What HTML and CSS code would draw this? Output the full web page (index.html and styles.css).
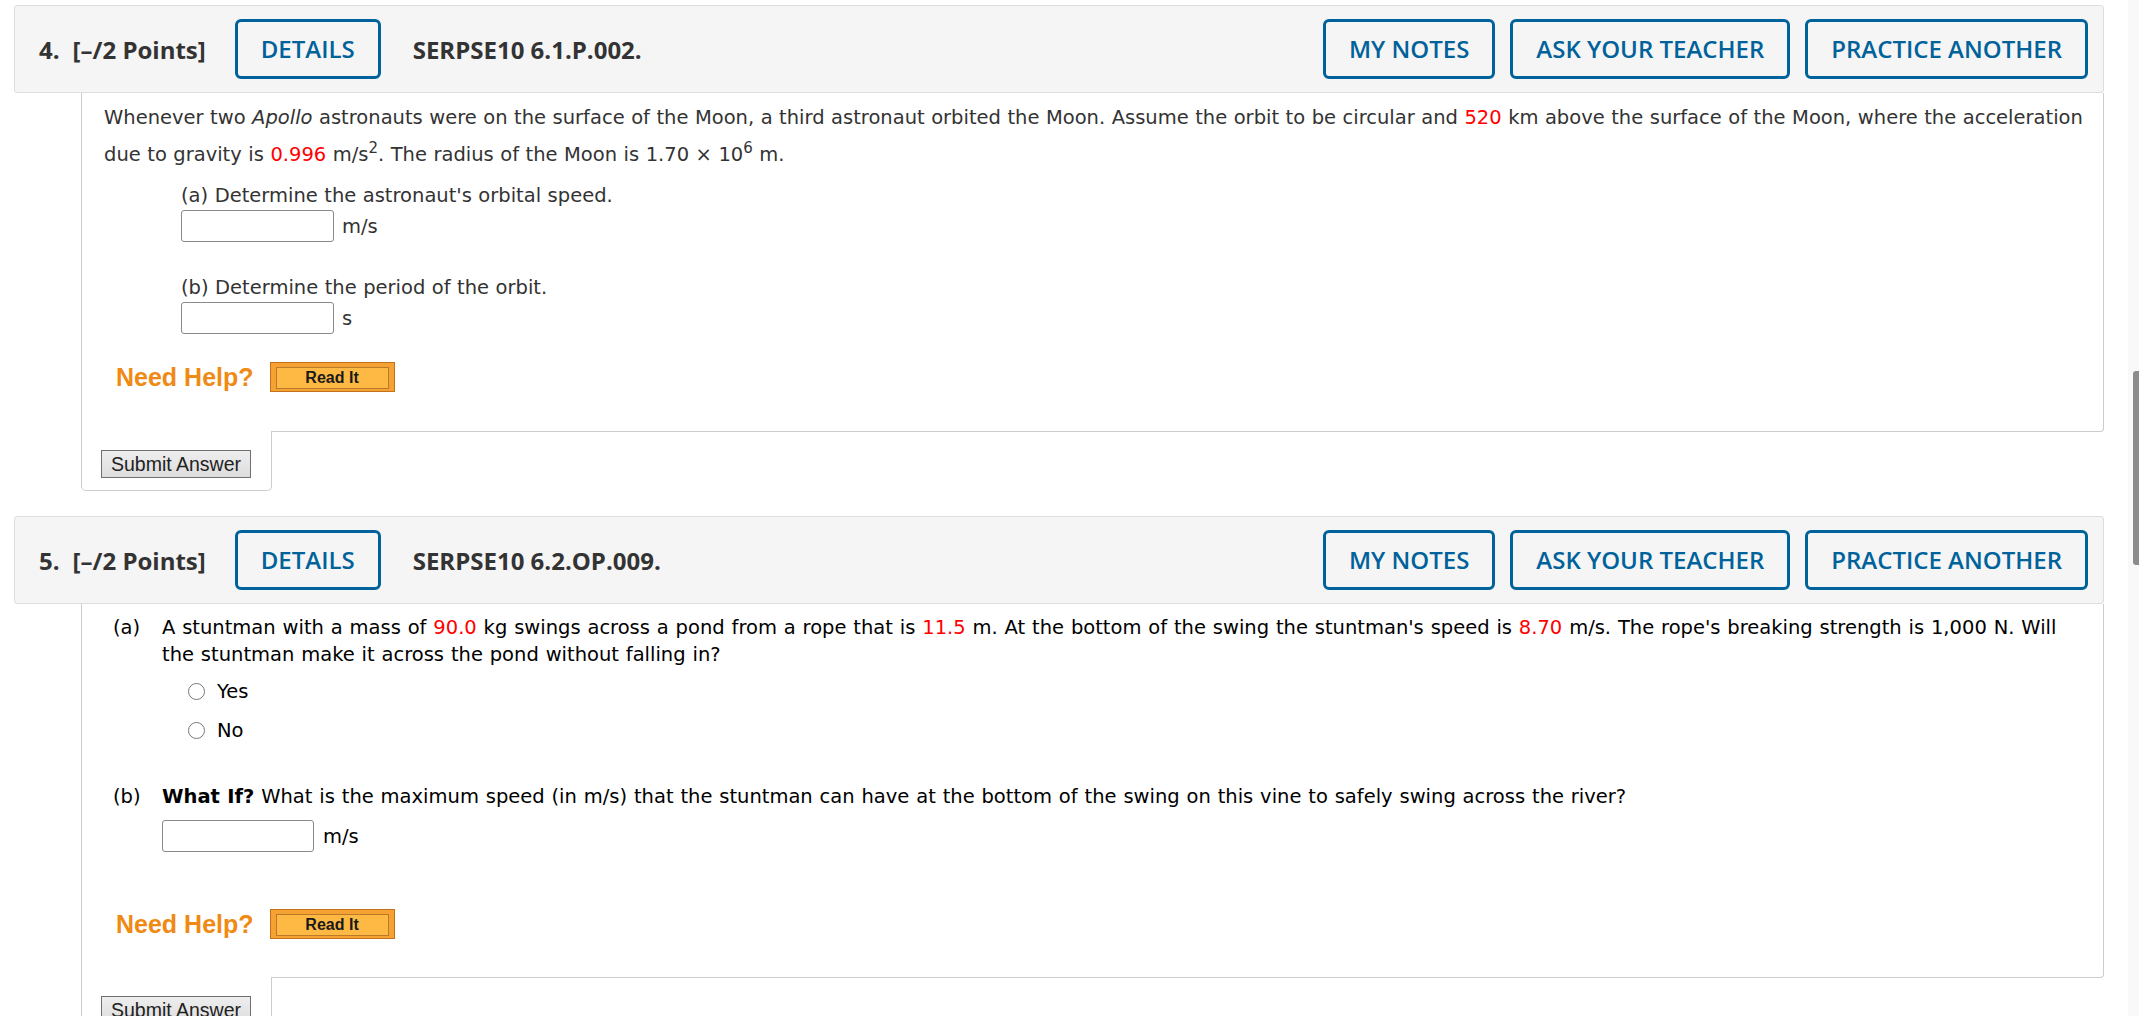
FILE: index.html
```html
<!DOCTYPE html>
<html lang="en">
<head>
<meta charset="utf-8">
<title>Questions</title>
<link rel="stylesheet" href="styles.css">
</head>
<body>
<main class="page">

  <section class="question">
    <header class="q-header">
      <span class="q-num">4.</span>
      <span class="q-points">[–/2 Points]</span>
      <button class="hbtn hbtn-details">DETAILS</button>
      <span class="q-code">SERPSE10 6.1.P.002.</span>
      <div class="hactions">
        <button class="hbtn">MY NOTES</button>
        <button class="hbtn">ASK YOUR TEACHER</button>
        <button class="hbtn">PRACTICE ANOTHER</button>
      </div>
    </header>
    <div class="q-body q4">
      <p class="intro">Whenever two <i>Apollo</i> astronauts were on the surface of the Moon, a third astronaut orbited the Moon. Assume the orbit to be circular and <span class="red">520</span> km above the surface of the Moon, where the acceleration due to gravity is <span class="red">0.996</span> m/s<sup>2</sup>. The radius of the Moon is 1.70 × 10<sup>6</sup> m.</p>
      <div class="part part-a">
        <div class="part-label">(a) Determine the astronaut's orbital speed.</div>
        <div class="answer-row"><input class="answer" type="text"><span class="unit">m/s</span></div>
      </div>
      <div class="part part-b">
        <div class="part-label">(b) Determine the period of the orbit.</div>
        <div class="answer-row"><input class="answer" type="text"><span class="unit">s</span></div>
      </div>
      <div class="help-row">
        <span class="need-help">Need Help?</span>
        <button class="read-it"><span class="read-it-inner">Read It</span></button>
      </div>
    </div>
    <div class="q-footer">
      <div class="submit-tab"><button class="submit">Submit Answer</button></div>
    </div>
  </section>

  <section class="question">
    <header class="q-header">
      <span class="q-num">5.</span>
      <span class="q-points">[–/2 Points]</span>
      <button class="hbtn hbtn-details">DETAILS</button>
      <span class="q-code">SERPSE10 6.2.OP.009.</span>
      <div class="hactions">
        <button class="hbtn">MY NOTES</button>
        <button class="hbtn">ASK YOUR TEACHER</button>
        <button class="hbtn">PRACTICE ANOTHER</button>
      </div>
    </header>
    <div class="q-body q5">
      <div class="qgrid">
        <div class="qlabel">(a)</div>
        <div class="qtext">
          <div class="stem">A stuntman with a mass of <span class="red">90.0</span> kg swings across a pond from a rope that is <span class="red">11.5</span> m. At the bottom of the swing the stuntman's speed is <span class="red">8.70</span> m/s. The rope's breaking strength is 1,000 N. Will the stuntman make it across the pond without falling in?</div>
          <label class="opt opt-first"><input class="radio" type="radio" name="q5a"><span>Yes</span></label>
          <label class="opt"><input class="radio" type="radio" name="q5a"><span>No</span></label>
        </div>
        <div class="qlabel qlabel-b">(b)</div>
        <div class="qtext qtext-b">
          <div class="stem"><b>What If?</b> What is the maximum speed (in m/s) that the stuntman can have at the bottom of the swing on this vine to safely swing across the river?</div>
          <div class="answer-row answer-row-b"><input class="answer" type="text"><span class="unit">m/s</span></div>
        </div>
      </div>
      <div class="help-row help-row-q5">
        <span class="need-help">Need Help?</span>
        <button class="read-it"><span class="read-it-inner">Read It</span></button>
      </div>
    </div>
    <div class="q-footer">
      <div class="submit-tab"><button class="submit">Submit Answer</button></div>
    </div>
  </section>

</main>
<div class="scrollbar"><div class="scroll-thumb"></div></div>
</body>
</html>
```

FILE: styles.css
```css
* { box-sizing: border-box; }

html, body {
  margin: 0;
  padding: 0;
  background: #ffffff;
}

body {
  font-family: "DejaVu Sans", Verdana, sans-serif;
  font-size: 19.5px;
  color: #333333;
  overflow: hidden;
}

.page {
  width: 2090px;
  margin-left: 14px;
  padding-top: 5px;
}

.question + .question {
  margin-top: 25px;
}

/* header */
.q-header {
  display: flex;
  align-items: center;
  height: 88px;
  padding: 0 15px 0 24px;
  background: #f5f5f5;
  border: 1px solid #dddddd;
  border-radius: 3px;
  font-family: "Open Sans", sans-serif;
  font-size: 24px;
  color: #333333;
}

.q-num { font-weight: 700; }
.q-points { font-weight: 700; margin-left: 13px; }
.q-code { font-weight: 700; margin-left: 32px; }

.hbtn {
  height: 60px;
  padding: 0 23px;
  border: 3px solid #00629b;
  border-radius: 6px;
  background: transparent;
  color: #00629b;
  font-family: "Open Sans", sans-serif;
  font-size: 24px;
  font-weight: 600;
  line-height: 1;
}

.hbtn-details { margin-left: 29px; }

.hactions {
  margin-left: auto;
  display: flex;
  gap: 15px;
}

/* body */
.q-body {
  margin-left: 67px;
  border: 1px solid #cccccc;
  border-top: 0;
  border-bottom-right-radius: 4px;
}

.red { color: #ff0000; }

sup {
  font-size: 15px;
  line-height: 0;
  vertical-align: 8px;
}

.q4 {
  padding: 6px 0 39px 0;
  word-spacing: 0.3px;
}

.intro {
  margin: 0 0 0 22px;
  line-height: 37px;
}

.part { margin-left: 99px; }
.part-a { margin-top: 9px; }
.part-b { margin-top: 32px; }

.part-label { line-height: 27px; }

.answer-row {
  display: flex;
  align-items: center;
  margin-top: 1px;
  height: 32px;
}

.answer {
  width: 153px;
  height: 32px;
  margin: 0;
  border: 1px solid #8a8a8a;
  border-radius: 3px;
  background: #ffffff;
  padding: 0 4px;
}

.unit {
  margin-left: 8px;
  line-height: 27px;
}

.help-row {
  display: flex;
  align-items: center;
  margin-left: 34px;
  margin-top: 28px;
  height: 30px;
}

.need-help {
  font-family: "Liberation Sans", Arial, sans-serif;
  font-weight: 700;
  font-size: 25px;
  color: #ef8a14;
  word-spacing: 0;
}

.read-it {
  margin-left: 16px;
  width: 125px;
  height: 30px;
  padding: 4px 5px 2px 5px;
  border: 1px solid #c2711c;
  background: #f6a232;
  cursor: pointer;
}

.read-it-inner {
  display: block;
  height: 100%;
  border: 1px solid #b97a2c;
  background: #fdb944;
  font-family: "Liberation Sans", Arial, sans-serif;
  font-weight: 700;
  font-size: 16px;
  line-height: 20px;
  color: #1a1a1a;
  text-align: center;
}

/* footer with submit tab */
.q-footer {
  margin-left: 67px;
  margin-top: -1px;
}

.submit-tab {
  width: 191px;
  padding: 19px 19px 12px 19px;
  background: #ffffff;
  border: 1px solid #cccccc;
  border-top: 0;
  border-radius: 0 0 5px 5px;
}

.submit {
  display: block;
  width: 150px;
  height: 28px;
  padding: 0;
  border: 1px solid #707070;
  background: linear-gradient(#eeeeee, #dddddd);
  font-family: "Liberation Sans", Arial, sans-serif;
  font-size: 19.5px;
  color: #222222;
  line-height: 24px;
}

/* question 5 */
.q5 {
  padding: 10px 10px 38px 0;
  color: #000000;
  word-spacing: 0.66px;
}

.qgrid {
  display: grid;
  grid-template-columns: 49px 1fr;
  margin-left: 31px;
  line-height: 27px;
}

.qlabel-b, .qtext-b { margin-top: 39px; }

.opt {
  display: flex;
  align-items: center;
  height: 27px;
  margin-left: 26px;
  margin-top: 12px;
}

.opt-first { margin-top: 10px; }

.radio {
  appearance: none;
  -webkit-appearance: none;
  width: 17px;
  height: 17px;
  margin: 0 12px 0 0;
  border: 1.5px solid #777777;
  border-radius: 50%;
  background: #ffffff;
}

.answer-row-b {
  margin-top: 10px;
}

.answer-row-b .answer { width: 152px; }
.answer-row-b .unit { margin-left: 9px; }

.help-row-q5 {
  margin-left: 34px;
  margin-top: 57px;
}

/* overlay scrollbar */
.scrollbar {
  position: fixed;
  top: 0;
  right: 0;
  width: 11px;
  height: 100%;
  background: #f9f9f9;
}

.scroll-thumb {
  position: absolute;
  top: 371px;
  right: 0;
  width: 6px;
  height: 194px;
  background: #8c8c8c;
  border-radius: 3px 0 0 3px;
}
```
